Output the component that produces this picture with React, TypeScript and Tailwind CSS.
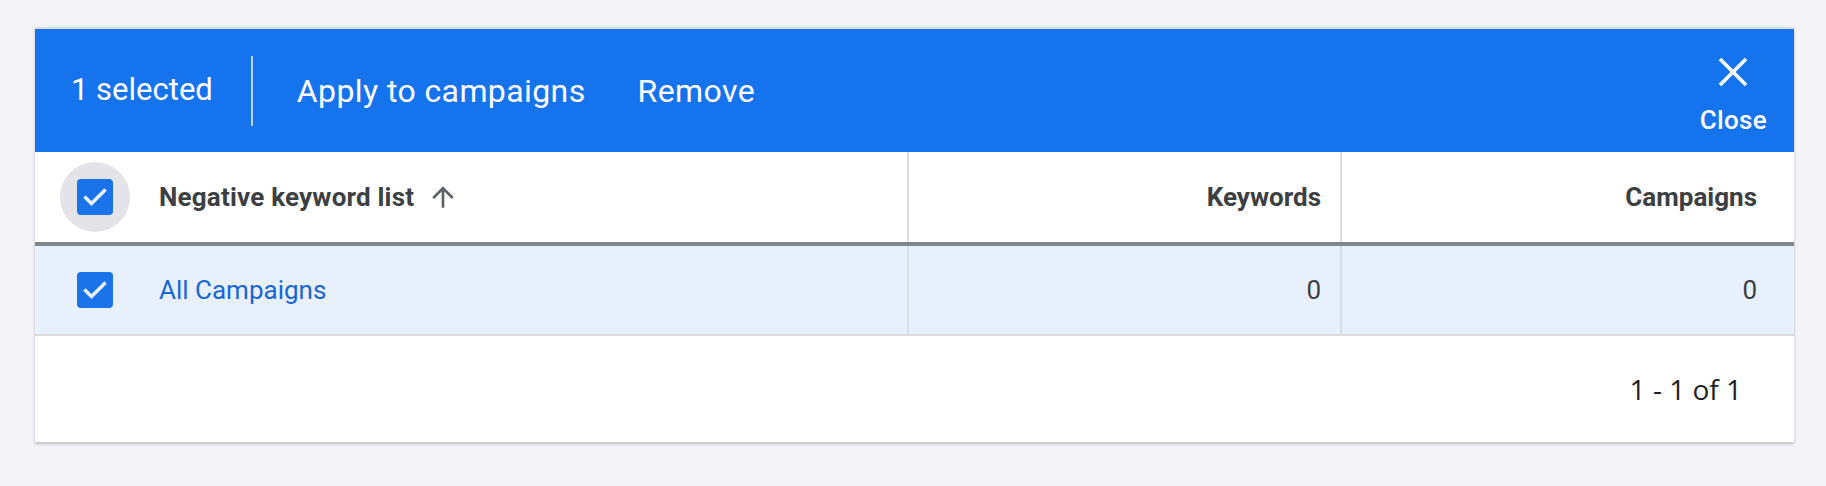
import React from "react";

const Check = () => (
  <div className="w-[36px] h-[36px] rounded-[4px] bg-[#1a73e8] flex items-center justify-center">
    <svg width="30" height="30" viewBox="0 0 24 24" fill="none">
      <path d="M4.5 12.5l4.7 4.7L19.5 7" stroke="#e8f0fe" strokeWidth="2.8" strokeLinecap="square" />
    </svg>
  </div>
);

export default function App() {
  return (
    <div
      className="w-full h-[486px] bg-[#f3f3f8] pt-[27px] pl-[35px] pr-[32px]"
      style={{ fontFamily: "Roboto, 'Liberation Sans', sans-serif" }}
    >
      <div className="bg-white border-t-2 border-[#dcdbe0] shadow-[0_2px_3px_rgba(0,0,0,0.22)]">
        {/* action bar */}
        <div className="h-[123px] bg-[#1673ee] flex items-center pl-[36px] text-white text-[32px] tracking-[0.4px]">
          <span className="text-[31px] tracking-normal">1 selected</span>
          <div className="ml-[38px] w-[2px] h-[70px] bg-white/70" />
          <span className="ml-[44px]">Apply to campaigns</span>
          <span className="ml-[52px]">Remove</span>
          <div className="ml-auto self-start mt-[28px] mr-[27px] flex flex-col items-center">
            <svg width="30" height="30" viewBox="0 0 30 30" fill="none">
              <path d="M2 2L28 28M28 2L2 28" stroke="white" strokeWidth="3.6" />
            </svg>
            <span className="mt-[18px] text-[26px] leading-[30px] font-medium tracking-[0.3px]">Close</span>
          </div>
        </div>

        {/* header */}
        <div className="grid grid-cols-[872px_433px_1fr] h-[94px] border-b-4 border-[#80868b] text-[#3c4043] text-[26px] font-bold">
          <div className="flex items-center pl-[25px]">
            <div className="w-[70px] h-[70px] rounded-full bg-[#e4e3e8] flex items-center justify-center">
              <Check />
            </div>
            <span className="ml-[29px] tracking-[0.2px]">Negative keyword list</span>
            <svg className="ml-[13px]" width="32" height="32" viewBox="0 0 24 24" fill="#5f6368">
              <path d="M4 12l1.41 1.41L11 7.83V20h2V7.83l5.58 5.59L20 12l-8-8-8 8z" />
            </svg>
          </div>
          <div className="border-l-2 border-[#dadce0] flex items-center justify-end pr-[19px]">Keywords</div>
          <div className="border-l-2 border-[#dadce0] flex items-center justify-end pr-[37px]">Campaigns</div>
        </div>

        {/* row */}
        <div className="grid grid-cols-[872px_433px_1fr] h-[90px] bg-[#e8f0fe] border-b-2 border-[#dadce0] text-[26px] text-[#3c4043]">
          <div className="flex items-center pl-[25px]">
            <div className="w-[70px] h-[70px] flex items-center justify-center">
              <Check />
            </div>
            <span className="ml-[29px] text-[#1967d2]">All Campaigns</span>
          </div>
          <div className="border-l-2 border-[#d6dce8] flex items-center justify-end pr-[19px]">0</div>
          <div className="border-l-2 border-[#d6dce8] flex items-center justify-end pr-[37px]">0</div>
        </div>

        {/* footer */}
        <div
          className="h-[106px] flex items-center justify-end pr-[52px] text-[28px] text-[#202124]"
          style={{ fontFamily: "'Open Sans', sans-serif" }}
        >
          1 - 1 of 1
        </div>
      </div>
    </div>
  );
}
